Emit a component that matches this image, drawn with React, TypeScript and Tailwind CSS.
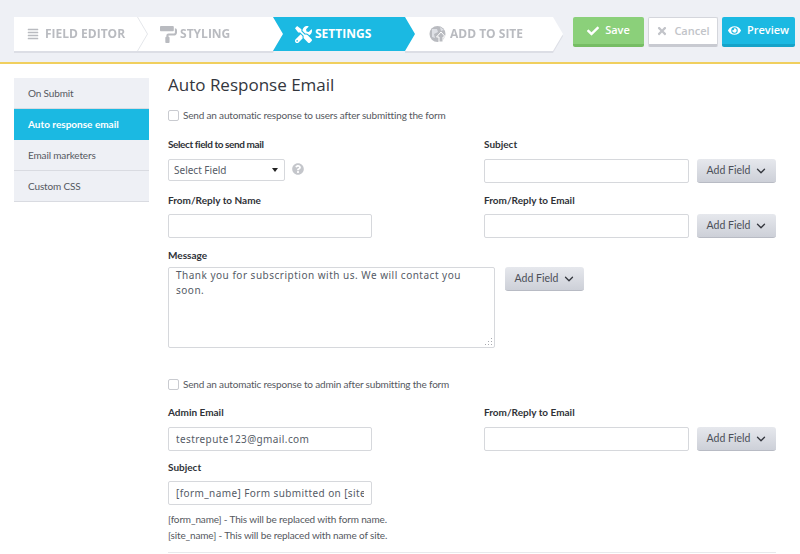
import { FaAlignJustify, FaPaintRoller, FaCheck, FaTimes, FaEye, FaQuestionCircle, FaTools } from "react-icons/fa";
import { LuChevronDown } from "react-icons/lu";

const labelFont = "font-['Lato',sans-serif]";
const inputFont = "font-['Noto_Sans',sans-serif] text-[10px] tracking-[0.4px] text-[#555b66]";

function AddField() {
  return (
    <button className={`flex h-[24px] w-[79px] shrink-0 items-center justify-center gap-[4px] rounded-[3px] border-b border-[#b8bbc4] bg-gradient-to-b from-[#e6e8ed] to-[#cdd0d8] pl-[2px] text-[10.5px] text-[#4b4f58] ${labelFont}`}>
      Add Field
      <LuChevronDown className="text-[14px] text-[#33363d]" strokeWidth={2.25} />
    </button>
  );
}

function Label({ children, className = "" }: { children: string; className?: string }) {
  return <label className={`block text-[10px] font-bold leading-[14px] text-[#2f3238] ${labelFont} ${className}`}>{children}</label>;
}

function TextInput({ value = "", width = "w-[204px]" }: { value?: string; width?: string }) {
  return (
    <input
      type="text"
      readOnly
      value={value}
      className={`block h-[24px] rounded-[2px] border border-[#d6d8dc] bg-white px-[7px] outline-none ${inputFont} ${width}`}
    />
  );
}

function Check({ children }: { children: string }) {
  return (
    <label className={`flex items-center gap-[4px] text-[10px] leading-[16px] tracking-[-0.18px] text-[#555860] ${labelFont}`}>
      <span className="h-[11px] w-[11px] rounded-[2px] border border-[#c9cbd0] bg-white" />
      {children}
    </label>
  );
}

function AddSiteIcon() {
  return (
    <svg width="18" height="18" viewBox="0 0 18 18" className="text-[#b9bbc0]">
      <circle cx="8.5" cy="9" r="8" fill="currentColor" />
      <path d="M3 4h5l1 3-4 2 1 4-3-1zM11 2l4 3-3 1z" fill="#eef0f5" opacity="0.7" />
      <path d="M12 7l4.5 5H14v5h-4v-5H7.5z" fill="currentColor" stroke="#fff" strokeWidth="1" />
    </svg>
  );
}

function Steps() {
  return (
    <div className="flex h-[34px] w-[549px] font-['Open_Sans',sans-serif] text-[12px] font-bold">
      <div className="drop-shadow-[0_2px_0_#dcdee5]">
        <div className="relative flex h-[34px] w-[269px] items-center bg-white text-[#b9bbc0] [clip-path:polygon(0_0,259px_0,269px_50%,259px_100%,0_100%)]">
          <FaAlignJustify className="ml-[13px] text-[12px]" />
          <span className="ml-[6px]">FIELD EDITOR</span>
          <svg width="11" height="34" viewBox="0 0 11 34" className="absolute left-[123px] top-0">
            <path d="M0.5 0l10 17-10 17" fill="none" stroke="#e4e6ea" strokeWidth="1" />
          </svg>
          <FaPaintRoller className="ml-[35px] text-[17px]" />
          <span className="ml-[3px]">STYLING</span>
        </div>
      </div>
      <div className="z-10 -ml-[10px] flex h-[34px] w-[142px] items-center bg-[#1bb9e2] pl-[22px] text-white [clip-path:polygon(0_0,132px_0,142px_50%,132px_100%,0_100%,10px_50%)]">
        <FaTools className="text-[17px]" />
        <span className="ml-[3px]">SETTINGS</span>
      </div>
      <div className="-ml-[10px] drop-shadow-[0_2px_0_#dcdee5]">
        <div className="flex h-[34px] w-[158px] items-center bg-white pl-[24px] text-[#b9bbc0] [clip-path:polygon(0_0,148px_0,158px_50%,148px_100%,0_100%)]">
          <AddSiteIcon />
          <span className="ml-[3px]">ADD TO SITE</span>
        </div>
      </div>
    </div>
  );
}

function Header() {
  return (
    <div className="flex h-[64px] items-start border-b-2 border-[#f0cf5e] bg-[#eef0f5] pl-[14px] pt-[17px]">
      <Steps />
      <div className="ml-[10px] flex gap-[4px] font-['Open_Sans',sans-serif] text-[11px] font-semibold">
        <button className="flex h-[30px] w-[71px] items-center justify-center gap-[6px] rounded-[2px] border-b-[3px] border-[#76bd64] bg-[#8bd07a] text-white">
          <FaCheck className="text-[12px]" /> Save
        </button>
        <button className="flex h-[30px] w-[70px] items-center justify-center gap-[6px] rounded-[2px] border border-b-[3px] border-[#d4d6dc] border-b-[#c8cad1] bg-white text-[#c2c4c9]">
          <FaTimes className="text-[12px]" /> Cancel
        </button>
        <button className="flex h-[30px] w-[73px] items-center justify-center gap-[6px] rounded-[2px] border-b-[3px] border-[#15a3c9] bg-[#1bb9e2] text-white">
          <FaEye className="text-[13px]" /> Preview
        </button>
      </div>
    </div>
  );
}

function Sidebar() {
  const items = ["On Submit", "Auto response email", "Email marketers", "Custom CSS"];
  return (
    <div className={`mt-[14px] w-[135px] shrink-0 text-[10px] ${labelFont}`}>
      {items.map((item) => (
        <div
          key={item}
          className={`flex h-[31px] items-center border-b pl-[14px] pt-[1px] ${
            item === "Auto response email"
              ? "border-[#1bb9e2] bg-[#1bb9e2] font-bold text-white"
              : "border-[#d9dbe1] bg-[#eef0f5] tracking-[-0.15px] text-[#55585f]"
          }`}
        >
          {item}
        </div>
      ))}
    </div>
  );
}

export default function App() {
  return (
    <div className="h-[554px] w-[800px] overflow-hidden bg-white">
      <Header />
      <div className="flex pl-[14px]">
        <Sidebar />
        <div className="ml-[19px] w-[608px]">
          <h1 className="mt-[8px] font-['Open_Sans',sans-serif] text-[17px] font-medium leading-[26px] text-[#33363d]">
            Auto Response Email
          </h1>
          <div className="mt-[9px]">
            <Check>Send an automatic response to users after submitting the form</Check>
          </div>

          <div className="mt-[14px] grid grid-cols-[316px_1fr]">
            <div>
              <Label className="tracking-[-0.4px]">Select field to send mail</Label>
              <div className="mt-[8px] flex items-center">
                <div className={`flex h-[22px] w-[117px] items-center justify-between rounded-[2px] border border-[#d6d8dc] pl-[5px] pr-[6px] ${inputFont} !tracking-normal`}>
                  Select Field
                  <span className="h-0 w-0 border-x-[3.5px] border-t-[4px] border-x-transparent border-t-[#222]" />
                </div>
                <FaQuestionCircle className="ml-[7px] -mt-[2px] text-[12px] text-[#c4c6cb]" />
              </div>
            </div>
            <div>
              <Label>Subject</Label>
              <div className="mt-[8px] flex gap-[8px]">
                <TextInput width="w-[205px]" />
                <AddField />
              </div>
            </div>
          </div>

          <div className="mt-[10px] grid grid-cols-[316px_1fr]">
            <div>
              <Label>From/Reply to Name</Label>
              <div className="mt-[7px]"><TextInput /></div>
            </div>
            <div>
              <Label>From/Reply to Email</Label>
              <div className="mt-[7px] flex gap-[8px]">
                <TextInput width="w-[205px]" />
                <AddField />
              </div>
            </div>
          </div>

          <div className="mt-[10px]">
            <Label>Message</Label>
            <div className="mt-[5px] flex items-start gap-[10px]">
              <div className="relative">
                <textarea
                  readOnly
                  value="Thank you for subscription with us. We will contact you soon."
                  className={`block h-[81px] w-[327px] resize-none rounded-[2px] border border-[#d6d8dc] bg-white pl-[7px] pr-[18px] leading-[15px] !tracking-[0.5px] outline-none ${inputFont}`}
                />
                <svg width="8" height="8" viewBox="0 0 8 8" className="absolute bottom-[2px] right-[2px] text-[#a8aab0]">
                  <g fill="currentColor">
                    <rect x="6" y="0" width="1" height="1" />
                    <rect x="3" y="3" width="1" height="1" />
                    <rect x="6" y="3" width="1" height="1" />
                    <rect x="0" y="6" width="1" height="1" />
                    <rect x="3" y="6" width="1" height="1" />
                    <rect x="6" y="6" width="1" height="1" />
                  </g>
                </svg>
              </div>
              <AddField />
            </div>
          </div>

          <div className="mt-[28px]">
            <Check>Send an automatic response to admin after submitting the form</Check>
          </div>

          <div className="mt-[13px] grid grid-cols-[316px_1fr]">
            <div>
              <Label>Admin Email</Label>
              <div className="mt-[8px]"><TextInput value="testrepute123@gmail.com" /></div>
            </div>
            <div>
              <Label>From/Reply to Email</Label>
              <div className="mt-[8px] flex gap-[8px]">
                <TextInput width="w-[205px]" />
                <AddField />
              </div>
            </div>
          </div>

          <div className="mt-[9px]">
            <Label>Subject</Label>
            <div className="mt-[7px]"><TextInput value="[form_name] Form submitted on [site_name]" /></div>
          </div>

          <div className={`mt-[6px] text-[10px] leading-[16px] tracking-[-0.15px] text-[#555860] ${labelFont}`}>
            <p>[form_name] - This will be replaced with form name.</p>
            <p>[site_name] - This will be replaced with name of site.</p>
          </div>
          <div className="mt-[9px] border-t border-[#e8e9ec]" />
        </div>
      </div>
    </div>
  );
}
